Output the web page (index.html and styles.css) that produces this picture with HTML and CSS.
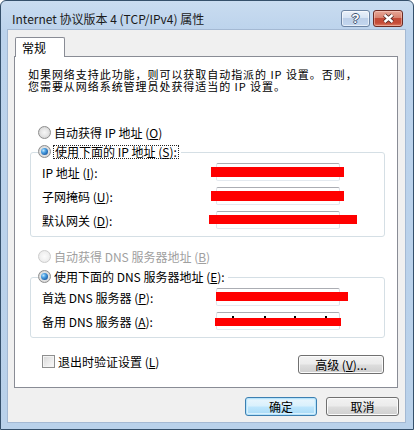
FILE: index.html
```html
<!DOCTYPE html>
<html lang="zh-CN">
<head>
<meta charset="utf-8">
<title>Internet 协议版本 4 (TCP/IPv4) 属性</title>
<link rel="stylesheet" href="styles.css">
</head>
<body>
<div class="window">
  <div class="titlebar">
    <span class="title">Internet 协议版本 4 (TCP/IPv4) 属性</span>
    <div class="caption-btns">
      <div class="cbtn help"><span class="q">?</span></div>
      <div class="cbtn close">
        <svg width="13" height="11" viewBox="0 0 13 11"><path d="M2.5 2 L10.5 9 M10.5 2 L2.5 9" stroke="#4a2622" stroke-width="4.2"/><path d="M2.5 2 L10.5 9 M10.5 2 L2.5 9" stroke="#fff" stroke-width="2.4"/></svg>
      </div>
    </div>
  </div>
  <div class="client">
    <div class="tabs"><div class="tab">常规</div></div>
    <div class="panel">
      <p class="desc"><span class="line">如果网络支持此功能，则可以获取自动指派的 IP 设置。否则，</span><span class="line">您需要从网络系统管理员处获得适当的 IP 设置。</span></p>
      <div class="radio r-auto"><span class="rb"></span><span>自动获得 IP 地址 (<u>O</u>)</span></div>
      <div class="group g1">
        <div class="radio legend"><span class="rb on"></span><span class="focus">使用下面的 IP 地址 (<u>S</u>):</span></div>
        <div class="field"><span class="lbl">IP 地址 (<u>I</u>):</span><span class="input"><i class="redact rd1"></i></span></div>
        <div class="field"><span class="lbl">子网掩码 (<u>U</u>):</span><span class="input"><i class="redact rd2"></i></span></div>
        <div class="field"><span class="lbl">默认网关 (<u>D</u>):</span><span class="input"><i class="redact rd3"></i></span></div>
      </div>
      <div class="radio r-dns disabled"><span class="rb"></span><span>自动获得 DNS 服务器地址 (<u>B</u>)</span></div>
      <div class="group g2">
        <div class="radio legend"><span class="rb on"></span><span>使用下面的 DNS 服务器地址 (<u>E</u>):</span></div>
        <div class="field"><span class="lbl">首选 DNS 服务器 (<u>P</u>):</span><span class="input"><i class="redact rd4"></i></span></div>
        <div class="field"><span class="lbl">备用 DNS 服务器 (<u>A</u>):</span><span class="input"><i class="dot d1"></i><i class="dot d2"></i><i class="dot d3"></i><i class="dot d4"></i><i class="redact rd5"></i></span></div>
      </div>
      <div class="bottom-row">
        <div class="check"><span class="cb"></span><span>退出时验证设置 (<u>L</u>)</span></div>
        <div class="btn adv">高级 (<u>V</u>)...</div>
      </div>
    </div>
    <div class="footer">
      <div class="btn default">确定</div>
      <div class="btn">取消</div>
    </div>
  </div>
</div>
</body>
</html>
```
FILE: styles.css
```css
* { box-sizing: border-box; }
html, body { margin: 0; padding: 0; background: #fff; }
body {
  font-family: "Noto Sans CJK SC", "Noto Sans", sans-serif;
  font-size: 12px;
  color: #000;
}
u { text-decoration: underline; text-underline-offset: 1px; }

.window {
  width: 414px;
  height: 430px;
  border: 1px solid #35506b;
  border-radius: 6px 6px 0 0;
  background: linear-gradient(180deg, #c9dcf0 0, #bcd3ec 30px, #b9d1ea 100%);
  padding: 0 8px 7px 7px;
  display: flex;
  flex-direction: column;
}

.titlebar {
  height: 29px;
  display: flex;
  align-items: flex-start;
  flex: none;
}
.title {
  padding: 9px 0 0 4px;
  line-height: 18px;
  font-size: 12px;
  color: #1a1a1a;
  white-space: nowrap;
}
.caption-btns {
  margin: 9px 2px 0 auto;
  display: flex;
  gap: 3px;
}
.cbtn {
  height: 17px;
  border-radius: 3px;
  display: flex;
  align-items: center;
  justify-content: center;
}
.help {
  width: 29px;
  border: 1px solid #6c84a3;
  background: linear-gradient(180deg, #eaf1fa 0%, #d7e4f4 45%, #bccfe8 50%, #c3d7ef 100%);
  box-shadow: inset 0 0 0 1px rgba(255,255,255,0.6);
}
.q {
  font-family: "Liberation Sans", sans-serif;
  font-weight: bold;
  font-size: 13px;
  line-height: 13px;
  color: #fff;
  text-shadow: 1px 0 0 #3f5674, -1px 0 0 #3f5674, 0 1px 0 #3f5674, 0 -1px 0 #3f5674;
}
.close {
  width: 30px;
  border: 1px solid #6b2b24;
  background: linear-gradient(180deg, #e7a797 0%, #d88370 45%, #c24b37 50%, #c54b37 80%, #df8168 100%);
  box-shadow: inset 0 0 0 1px rgba(255,220,210,0.45);
}
.close svg { display: block; }

.client {
  flex: 1;
  background: #f0f0f0;
  box-shadow: 0 0 0 1px #a4b9d3;
  padding-top: 7px;
  display: flex;
  flex-direction: column;
}
.tabs { display: flex; }
.tab {
  position: relative;
  z-index: 1;
  margin-left: 7px;
  margin-bottom: -1px;
  width: 50px;
  height: 20px;
  border: 1px solid #898c95;
  border-bottom: none;
  border-radius: 2px 2px 0 0;
  background: #fff;
  padding-left: 6px;
  line-height: 19px;
}
.panel {
  margin-left: 6px;
  width: 384px;
  border: 1px solid #898c95;
  background: #fff;
  padding: 0 12px 13px 15px;
}
.desc {
  margin: 11px 0 0 -2px;
  white-space: nowrap;
  display: flex;
  flex-direction: column;
}
.desc .line {
  display: block;
  height: 12px;
  line-height: 12px;
  font-size: 11px;
  letter-spacing: 0.95px;
}

.radio {
  display: flex;
  align-items: center;
  height: 13px;
  line-height: 13px;
  gap: 3px;
  white-space: nowrap;
}
.rb {
  width: 13px;
  height: 13px;
  border-radius: 50%;
  border: 1px solid #8d8d8d;
  background: radial-gradient(circle at 50% 50%, #f6f6f6 0, #e6e6e6 45%, #c9c9c9 100%);
  display: flex;
  align-items: center;
  justify-content: center;
  flex: none;
}
.rb.on::after {
  content: "";
  width: 7px;
  height: 7px;
  border-radius: 50%;
  background: radial-gradient(circle at 35% 35%, #bfe6ff 0, #4b9fe0 35%, #1d5fa8 75%, #174c8a 100%);
}
.disabled { color: #a0a0a0; }
.disabled .rb {
  border-color: #cdcdcd;
  background: radial-gradient(circle at 50% 50%, #fbfbfb 0, #f0f0f0 55%, #e2e2e2 100%);
}
.r-auto { margin: 34px 0 0 8px; }
.r-dns { margin: 13px 0 0 8px; }

.group {
  position: relative;
  border: 1px solid #d5dfe5;
  border-radius: 3px;
  padding: 10px 0 7px 11px;
}
.g1 { margin-top: 13px; }
.g2 { margin-top: 14px; }
.legend {
  position: absolute;
  top: -8px;
  left: 7px;
  background: #fff;
  padding-right: 3px;
}
.focus {
  outline: 1px dotted #222;
  outline-offset: 0;
  padding: 0 1px;
  line-height: 12px;
}

.field {
  display: flex;
  align-items: center;
  height: 18px;
}
.field + .field { margin-top: 6px; }
.lbl {
  width: 174px;
  white-space: nowrap;
  flex: none;
}
.input {
  position: relative;
  width: 124px;
  height: 18px;
  border: 1px solid;
  border-color: #abadb3 #dbdfe6 #e3e9ef #e2e3ea;
  border-radius: 2px;
  background: #fff;
}
.redact {
  position: absolute;
  background: #ff0000;
}
.rd1 { left: -6px; top: 3px; width: 133px; height: 10px; }
.rd2 { left: -6px; top: 3px; width: 133px; height: 10px; }
.rd3 { left: -8px; top: 3px; width: 148px; height: 9px; }
.rd4 { left: -1px; top: 3px; width: 132px; height: 9px; }
.rd5 { left: -2px; top: 5px; width: 126px; height: 8px; }
.dot {
  position: absolute;
  top: 3px;
  width: 2px;
  height: 2px;
  background: #000;
}
.d1 { left: 15px; }
.d2 { left: 47px; }
.d3 { left: 77px; }
.d4 { left: 108px; }

.bottom-row {
  margin-top: 17px;
  display: flex;
  justify-content: space-between;
  align-items: flex-start;
  padding-right: 1px;
}
.check {
  margin-left: 12px;
  display: flex;
  align-items: center;
  gap: 3px;
  height: 13px;
  line-height: 13px;
  white-space: nowrap;
}
.cb {
  width: 13px;
  height: 13px;
  border: 1px solid #8e8f8f;
  background: linear-gradient(135deg, #d6d6d6 0%, #eaeaea 50%, #fbfbfb 100%);
  box-shadow: inset 0 0 0 1px #f4f4f4;
  flex: none;
}

.btn {
  height: 19px;
  width: 73px;
  border: 1px solid #707070;
  border-radius: 3px;
  background: linear-gradient(180deg, #f2f2f2 0%, #ebebeb 48%, #dddddd 52%, #cfcfcf 100%);
  box-shadow: inset 0 0 0 1px #fbfbfb;
  display: flex;
  align-items: center;
  justify-content: center;
  line-height: 17px;
  white-space: nowrap;
}
.adv { width: 86px; }
.btn.default {
  width: 72px;
  border-color: #3c7fb1;
  background: linear-gradient(180deg, #eaf6fd 0%, #d9f0fc 48%, #bee6fd 52%, #a7d9f5 100%);
  box-shadow: inset 0 0 0 1px #b5e3fb, inset 0 0 0 2px #d8f0fd;
}

.footer {
  margin-top: 9px;
  display: flex;
  justify-content: flex-end;
  gap: 9px;
  padding-right: 6px;
}
```
